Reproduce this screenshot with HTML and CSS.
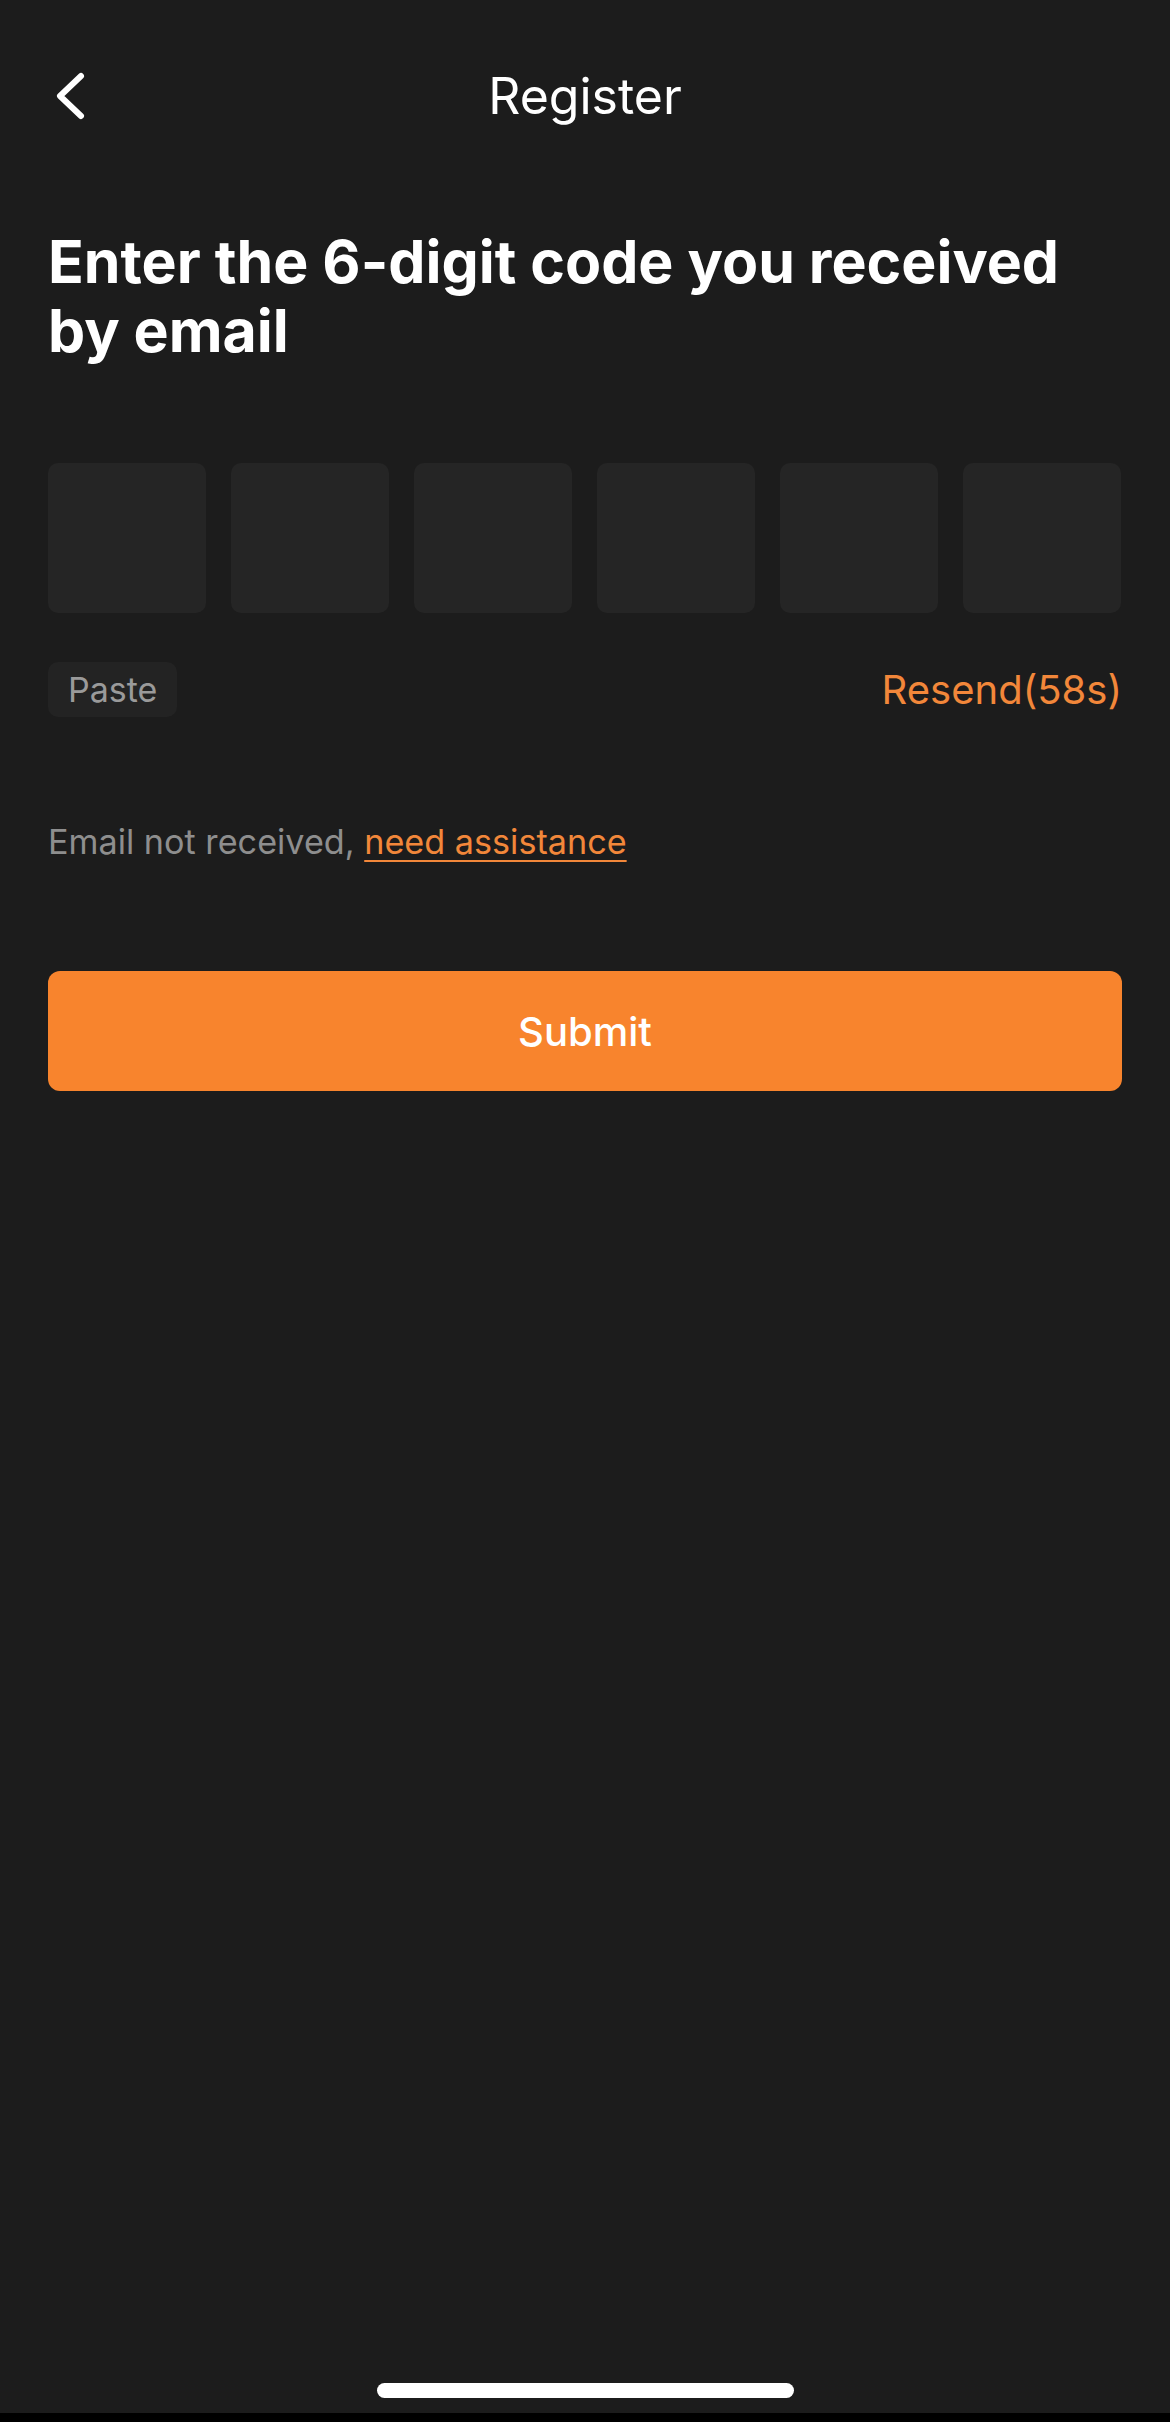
FILE: index.html
```html
<!DOCTYPE html>
<html lang="en">
<head>
  <meta charset="UTF-8" />
  <meta name="viewport" content="width=device-width, initial-scale=1.0" />
  <title>Register</title>
  <link rel="stylesheet" href="styles.css">
</head>
<body>
  <header class="topbar">
    <a href="#" class="back" aria-label="Back">
      <svg width="40" height="60" viewBox="0 0 40 60">
        <path d="M33 10 L12 30 L33 50" fill="none" stroke="#fff" stroke-width="6" stroke-linecap="round" stroke-linejoin="round" />
      </svg>
    </a>
    <div class="title">Register</div>
    <div></div>
  </header>

  <main class="content">
    <h1>Enter the 6-digit code you received by email</h1>

    <div class="code">
      <input class="digit" maxlength="1" inputmode="numeric">
      <input class="digit" maxlength="1" inputmode="numeric">
      <input class="digit" maxlength="1" inputmode="numeric">
      <input class="digit" maxlength="1" inputmode="numeric">
      <input class="digit" maxlength="1" inputmode="numeric">
      <input class="digit" maxlength="1" inputmode="numeric">
    </div>

    <div class="actions">
      <button class="paste">Paste</button>
      <span class="resend" id="resend">Resend(58s)</span>
    </div>

    <p class="help">Email not received, <a href="#">need assistance</a></p>

    <button class="submit">Submit</button>
  </main>

  <footer class="home">
    <div class="home-bar"></div>
  </footer>
</body>
</html>
```

FILE: styles.css
```css
* {
  margin: 0;
  padding: 0;
  box-sizing: border-box;
}

body {
  font-family: Inter, 'Noto Sans', sans-serif;
  background: #1c1c1c;
  color: #fff;
  min-height: 100vh;
  display: flex;
  flex-direction: column;
}

.topbar {
  height: 192px;
  padding: 0 48px;
  display: grid;
  grid-template-columns: 1fr auto 1fr;
  align-items: center;
}

.back {
  display: flex;
  width: 40px;
}

.title {
  font-size: 50px;
  font-weight: 400;
}

.content {
  flex: 1;
  padding: 0 48px;
}

h1 {
  max-width: 1050px;
  margin-top: 35px;
  font-size: 59px;
  line-height: 69px;
  font-weight: 700;
}

.code {
  margin-top: 98px;
  display: flex;
  gap: 25px;
}

.digit {
  width: 158px;
  height: 150px;
  border: none;
  border-radius: 10px;
  background: #252525;
  color: #fff;
  font-family: inherit;
  font-size: 60px;
  text-align: center;
  outline: none;
}

.actions {
  margin-top: 49px;
  display: flex;
  justify-content: space-between;
  align-items: center;
}

.paste {
  height: 55px;
  padding: 0 20px;
  border: none;
  border-radius: 10px;
  background: #232323;
  color: #9a9a9a;
  font-family: inherit;
  font-size: 34px;
}

.resend {
  color: #f2873a;
  font-size: 40px;
}

.help {
  margin-top: 101px;
  font-size: 34.2px;
  line-height: 48px;
  color: #8e8e8e;
}

.help a {
  color: #f2873a;
  text-decoration: underline;
  text-decoration-thickness: 2px;
  text-underline-offset: 6px;
}

.submit {
  margin-top: 105px;
  width: 100%;
  height: 120px;
  border: none;
  border-radius: 12px;
  background: #f8842d;
  color: #fff;
  font-family: inherit;
  font-size: 40px;
  font-weight: 500;
}

.home {
  padding-bottom: 15px;
  display: flex;
  justify-content: center;
  border-bottom: 9px solid #000;
}

.home-bar {
  width: 417px;
  height: 15px;
  border-radius: 8px;
  background: #fff;
}
```
